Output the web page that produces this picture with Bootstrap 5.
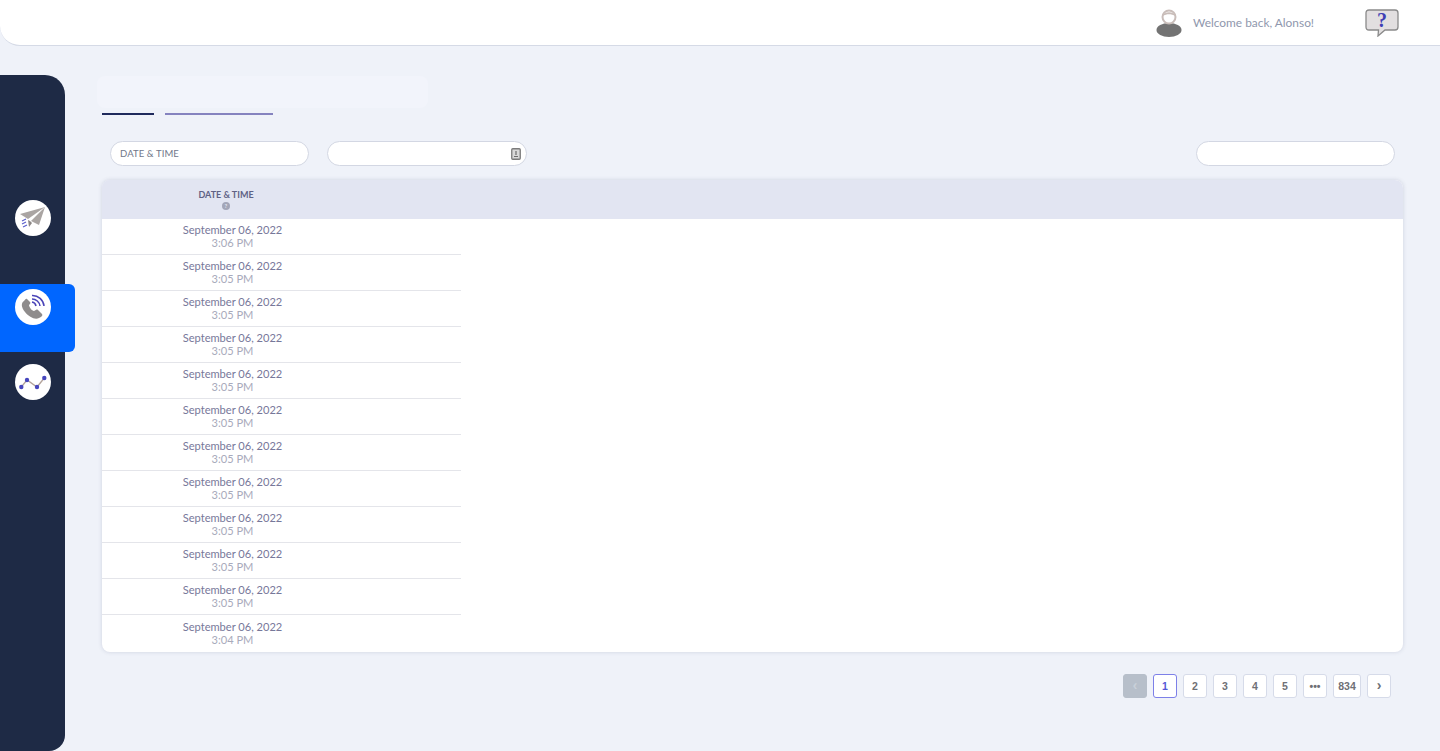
<!DOCTYPE html>
<html lang="en">
<head>
<meta charset="utf-8">
<title>Calls</title>
<link href="https://cdn.jsdelivr.net/npm/bootstrap@5.3.0/dist/css/bootstrap.min.css" rel="stylesheet">
<style>
html,body{height:751px;overflow:hidden}
body{background:#eff2f9;font-family:"Lato","Noto Sans",sans-serif;color:#6f7290}
.topbar{height:46px;background:#fff;border-bottom:1px solid #d5dae6;border-bottom-left-radius:20px;padding-right:41px}
.avatar-ic{margin-right:11px}
.welcome{font-size:11.9px;color:#8f97ad;margin-right:50px;width:122px;white-space:nowrap}
.shell{height:705px;padding-top:29px}
.sidebar{width:65px;height:676px;background:#1e2a45;border-radius:0 20px 16px 0;padding-top:125px;flex:none}
.side-item{height:68px;width:65px;padding-left:15px}
.side-item.is-on{background:#0066ff;width:75px;border-radius:0 6px 6px 0;padding-top:5px}
.side-first{height:84px;padding-top:0}
.side-last{margin-top:12px}
.disc{width:36px;height:36px;background:#fff;border-radius:50%}
.content{width:1338px;margin-left:37px}
.tabs-ghost{width:331px;height:32px;margin-left:-5px;margin-top:1px;background:#f2f4fb;border-radius:8px}
.tab-lines{margin-top:5px;height:2px}
.tl-a{width:52px;background:#1f2a5c}
.tl-b{width:108px;background:#8583bf;margin-left:11px}
.filters{margin-top:26px;padding-left:8px;padding-right:8px;width:1301px}
.pill{width:199px;height:25px;background:#fff;border:1px solid #d3d7e3;border-radius:13px;font-size:9.5px;color:#70778a;padding:1px 9px 0;letter-spacing:.1px}
.pill-b{width:200px;margin-left:18px;padding-right:5px}
.data-card{margin-top:14px;width:1301px;height:472px;border:0;border-radius:8px;background:#fff;box-shadow:0 0 4px rgba(60,70,110,.18);overflow:hidden}
.data-head{height:39px;background:#e2e5f2;width:248px;padding-top:9px;font-size:9px;font-weight:700;color:#5f6285;line-height:12px}
.head-band{background:#e2e5f2}
.qmark{width:8px;height:8px;border-radius:50%;background:#a3a6b8;margin-top:1px;color:#e2e5f2;font-size:6px;line-height:8px}
.data-row{width:359px;height:36px;border-bottom:1px solid #e4e5ea;padding-right:98px;padding-top:4px;line-height:13px;font-size:11.1px}
.data-row:last-child{border-bottom:0;padding-top:5px}
.dt{color:#77789a}
.tm{color:#a8aabb}
.pager{margin-top:22px;width:1289px;gap:6px}
.pager .page-item .page-link{width:24px;height:24px;margin-left:0;padding:0;line-height:23px;text-align:center;font-size:10.5px;font-weight:700;color:#6f7075;border:1px solid #d6dbe9;border-radius:3px;background:#fff;font-family:"Liberation Sans",sans-serif}
.pager .page-item.active .page-link{color:#5557d6;border-color:#7d80e8;background:#fff}
.pager .page-item.disabled .page-link{background:#b7bfca;border-color:#b7bfca;color:#c9d0d9}
.pager .page-item .page-link.wide{width:28px}
.pager .page-item .page-link.chev{font-size:14px;line-height:21px}
</style>
</head>
<body>
<header class="topbar d-flex align-items-center justify-content-end">
  <svg class="avatar-ic" width="26" height="30" viewBox="0 0 26 30"><ellipse cx="13" cy="22" rx="12.5" ry="7" fill="#737373"/><circle cx="13" cy="9" r="6.5" fill="#fff" stroke="#c9bdb9" stroke-width="2"/><path d="M6.5 8C8 3 18 3 19.500 8 15 5.500 11 5.500 6.500 8Z" fill="#c9bdb9"/></svg>
  <span class="welcome">Welcome back, Alonso!</span>
  <svg width="34" height="28" viewBox="0 0 34 28"><path d="M4 1H30Q33 1 33 4V18Q33 21 30 21H20L13 27 13.500 21H4Q1 21 1 18V4Q1 1 4 1Z" fill="#e2dfe0" stroke="#8a8a8a" stroke-width="1.300"/><text x="17" y="18" text-anchor="middle" font-family="Liberation Serif,serif" font-weight="700" font-size="20" fill="#3f3fb5">?</text></svg>
</header>
<div class="shell d-flex">
  <nav class="sidebar">
    <div class="side-item side-first"><div class="disc">
      <svg width="36" height="36" viewBox="0 0 36 36"><path d="M5 14 30 7 13 19Z" fill="#aaa5a3"/><path d="M30 7 16 21 24 25Z" fill="#aaa5a3"/><path d="M13 20 14 27 17 23 15 21Z" fill="#8c8785"/><path d="M7 21 11 19M7 24 11 22M8 27 12 25" stroke="#5a5ecb" stroke-width="1.100" fill="none"/></svg>
    </div></div>
    <div class="side-item is-on"><div class="disc">
      <svg width="36" height="36" viewBox="0 0 36 36"><path d="M9 12C6 14 6 18 10 23S20 31 24 29C27 28 28 26 27 25L23 21C22 20 21 21 19 22 17 22 14 18 14 16 15 15 16 14 15 13L12 10C11 9 10 11 9 12Z" fill="#8f8c8c"/><path d="M17 13A5 5 0 0 1 21 17M17 10A8 8 0 0 1 25 17M17 6.500A11.500 11.500 0 0 1 29 17" stroke="#4a44b8" stroke-width="1.500" fill="none"/></svg>
    </div></div>
    <div class="side-item side-last"><div class="disc">
      <svg width="36" height="36" viewBox="0 0 36 36"><path d="M6.300 23 12 16 22 23 29.300 14" stroke="#b3a49c" stroke-width="1.300" fill="none"/><circle cx="6.300" cy="23" r="2.200" fill="#4646bd"/><circle cx="12" cy="16" r="2.200" fill="#4646bd"/><circle cx="22" cy="23" r="2.200" fill="#4646bd"/><circle cx="29.300" cy="14" r="2.200" fill="#4646bd"/></svg>
    </div></div>
  </nav>
  <main class="content">
    <div class="tabs-ghost"></div>
    <div class="tab-lines d-flex"><div class="tl-a"></div><div class="tl-b"></div></div>
    <div class="filters d-flex">
      <div class="pill d-flex align-items-center">DATE &amp; TIME</div>
      <div class="pill pill-b d-flex align-items-center justify-content-end">
        <svg width="10" height="12" viewBox="0 0 10 12"><rect x=".75" y=".75" width="8.500" height="10.500" rx="1" fill="#d9d9d9" stroke="#7b7b7b" stroke-width="1.300"/><path d="M5 3V7M3 8.500H7" stroke="#6d6d6d" stroke-width="1.200"/></svg>
      </div>
      <div class="pill ms-auto"></div>
    </div>
    <section class="card data-card">
      <div class="head-band">
        <div class="data-head d-flex flex-column align-items-center text-center"><span>DATE &amp; TIME</span><span class="qmark">?</span></div>
      </div>
      <div class="data-row text-center"><div class="dt">September 06, 2022</div><div class="tm">3:06 PM</div></div>
      <div class="data-row text-center"><div class="dt">September 06, 2022</div><div class="tm">3:05 PM</div></div>
      <div class="data-row text-center"><div class="dt">September 06, 2022</div><div class="tm">3:05 PM</div></div>
      <div class="data-row text-center"><div class="dt">September 06, 2022</div><div class="tm">3:05 PM</div></div>
      <div class="data-row text-center"><div class="dt">September 06, 2022</div><div class="tm">3:05 PM</div></div>
      <div class="data-row text-center"><div class="dt">September 06, 2022</div><div class="tm">3:05 PM</div></div>
      <div class="data-row text-center"><div class="dt">September 06, 2022</div><div class="tm">3:05 PM</div></div>
      <div class="data-row text-center"><div class="dt">September 06, 2022</div><div class="tm">3:05 PM</div></div>
      <div class="data-row text-center"><div class="dt">September 06, 2022</div><div class="tm">3:05 PM</div></div>
      <div class="data-row text-center"><div class="dt">September 06, 2022</div><div class="tm">3:05 PM</div></div>
      <div class="data-row text-center"><div class="dt">September 06, 2022</div><div class="tm">3:05 PM</div></div>
      <div class="data-row text-center"><div class="dt">September 06, 2022</div><div class="tm">3:04 PM</div></div>
    </section>
    <ul class="pagination pager justify-content-end">
      <li class="page-item disabled"><a class="page-link chev" href="#">‹</a></li>
      <li class="page-item active"><a class="page-link" href="#">1</a></li>
      <li class="page-item"><a class="page-link" href="#">2</a></li>
      <li class="page-item"><a class="page-link" href="#">3</a></li>
      <li class="page-item"><a class="page-link" href="#">4</a></li>
      <li class="page-item"><a class="page-link" href="#">5</a></li>
      <li class="page-item"><a class="page-link" href="#">•••</a></li>
      <li class="page-item"><a class="page-link wide" href="#">834</a></li>
      <li class="page-item"><a class="page-link chev" href="#">›</a></li>
    </ul>
  </main>
</div>
<script src="https://cdn.jsdelivr.net/npm/bootstrap@5.3.0/dist/js/bootstrap.bundle.min.js"></script>
</body>
</html>
